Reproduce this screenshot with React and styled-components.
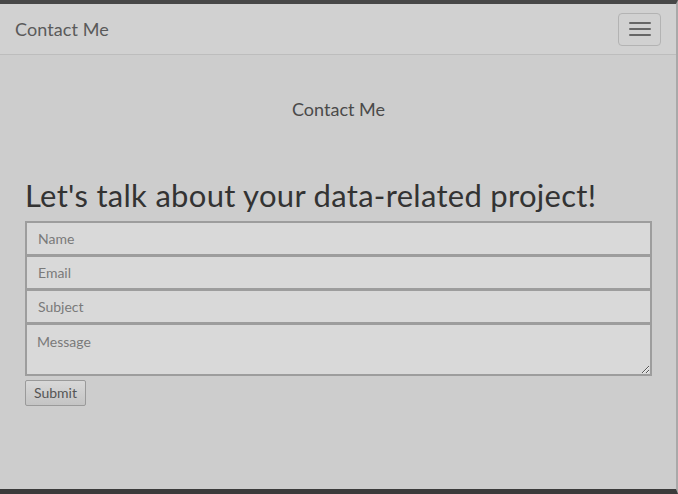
import styled, { createGlobalStyle } from 'styled-components';

const GlobalStyle = createGlobalStyle`
  html, body {
    margin: 0;
    padding: 0;
    height: 100%;
  }
  body {
    font-family: 'Lato', 'Open Sans', sans-serif;
    background: #cdcdcd;
  }
  #root {
    height: 100%;
  }
`;

const Page = styled.div`
  height: 100%;
  box-sizing: border-box;
  display: flex;
  flex-direction: column;
  border-top: 4px solid #474747;
  border-bottom: 5px solid #3b3b3b;
  border-right: 2px solid #a9a9a9;
  background: #cdcdcd;
`;

const Navbar = styled.nav`
  height: 51px;
  box-sizing: border-box;
  display: flex;
  align-items: center;
  justify-content: space-between;
  padding: 0 15px 0 15px;
  background: #d1d1d1;
  border-bottom: 1px solid #bdbdbd;
`;

const Brand = styled.a`
  font-size: 18px;
  color: #5a5a5a;
  text-decoration: none;
  letter-spacing: 0.1px;
`;

const Toggler = styled.button`
  width: 43px;
  height: 33px;
  box-sizing: border-box;
  border: 1px solid #b3b3b3;
  border-radius: 4px;
  background: transparent;
  display: flex;
  flex-direction: column;
  align-items: center;
  justify-content: center;
  gap: 4px;
  padding: 0;
`;

const Bar = styled.span`
  display: block;
  width: 22px;
  height: 2px;
  background: #666;
  border-radius: 1px;
`;

const Main = styled.main`
  flex: 1;
  padding: 0 24px 0 25px;
`;

const SectionTitle = styled.h2`
  margin: 43px 0 0;
  text-align: center;
  font-size: 18px;
  font-weight: 400;
  color: #4a4a4a;
`;

const Heading = styled.h1`
  margin: 56px 0 6px;
  font-size: 31px;
  font-weight: 400;
  letter-spacing: 0.3px;
  color: #333;
  line-height: 1.25;
`;

const Form = styled.form`
  display: flex;
  flex-direction: column;
  align-items: flex-start;
`;

const Field = styled.input`
  width: 100%;
  height: 35px;
  box-sizing: border-box;
  margin: 0 0 -1px;
  padding: 0 11px;
  border: 2px solid #9d9d9d;
  background: #d9d9d9;
  font-family: inherit;
  font-size: 14px;
  color: #444;
  &::placeholder {
    color: #7a7a7a;
  }
`;

const Area = styled(Field).attrs({ as: 'textarea' })`
  height: 53px;
  padding: 8px 10px;
  resize: vertical;
`;

const Submit = styled.button`
  margin-top: 5px;
  height: 26px;
  padding: 0 8px;
  border: 1px solid #9a9a9a;
  border-radius: 2px;
  background: linear-gradient(#d8d8d8, #c4c4c4);
  font-family: inherit;
  font-size: 14px;
  font-weight: 400;
  color: #555;
`;

export default function App() {
  return (
    <Page>
      <GlobalStyle />
      <Navbar>
        <Brand href="#">Contact Me</Brand>
        <Toggler aria-label="menu">
          <Bar />
          <Bar />
          <Bar />
        </Toggler>
      </Navbar>
      <Main>
        <SectionTitle>Contact Me</SectionTitle>
        <Heading>Let's talk about your data-related project!</Heading>
        <Form onSubmit={(e) => e.preventDefault()}>
          <Field placeholder="Name" />
          <Field placeholder="Email" />
          <Field placeholder="Subject" />
          <Area placeholder="Message" />
          <Submit>Submit</Submit>
        </Form>
      </Main>
    </Page>
  );
}
